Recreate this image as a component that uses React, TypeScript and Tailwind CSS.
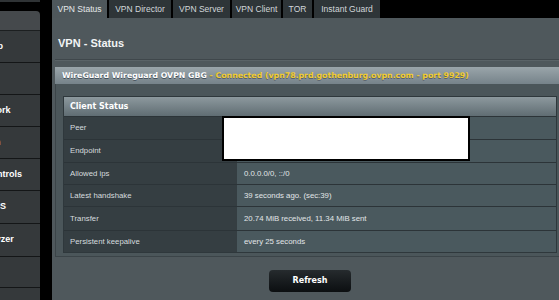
import React from "react";

const menu = [
  { label: "Network Map", h: "h-[32px]" },
  { label: "AiMesh", h: "h-[32px]" },
  { label: "Guest Network", h: "h-[32px]" },
  { label: "AiProtection", h: "h-[32px]" },
  { label: "Parental Controls", h: "h-[32px]" },
  { label: "Adaptive QoS", h: "h-[33px]" },
  { label: "Traffic Analyzer", h: "h-[33px]" },
  { label: "Game", h: "h-[31px]" },
  { label: "Open NAT", h: "h-[31px]" },
];

const tabs = [
  { label: "VPN Status", w: "w-[55px]", active: true },
  { label: "VPN Director", w: "w-[62px]" },
  { label: "VPN Server", w: "w-[57px]" },
  { label: "VPN Client", w: "w-[49px]" },
  { label: "TOR", w: "w-[29px]" },
  { label: "Instant Guard", w: "w-[66px]" },
];

const rows = [
  { label: "Peer", value: "", h: "h-[23px]" },
  { label: "Endpoint", value: "", h: "h-[23px]" },
  { label: "Allowed ips", value: "0.0.0.0/0, ::/0", h: "h-[22px]" },
  { label: "Latest handshake", value: "39 seconds ago. (sec:39)", h: "h-[22px]" },
  { label: "Transfer", value: "20.74 MiB received, 11.34 MiB sent", h: "h-[24px]" },
  { label: "Persistent keepalive", value: "every 25 seconds", h: "h-[22px]" },
];

export default function App() {
  return (
    <div className="w-[559px] h-[300px] overflow-hidden bg-black flex font-['Liberation_Sans',Arial,sans-serif]">
      {/* side menu, cut off on the left */}
      <aside className="w-[40px] shrink-0 flex flex-col overflow-hidden">
        <div className="h-[3px] bg-[#2f3335] border-b border-black shrink-0" />
        <div className="h-[8px] shrink-0" />
        <div className="h-[20px] shrink-0 bg-[#45494c] rounded-tr-[4px] border-b border-[#1c1f20]" />
        {menu.map((m) => (
          <div
            key={m.label}
            className={`${m.h} shrink-0 flex items-center bg-[#35393b] border-b border-[#141617] overflow-hidden`}
          >
            <span className="ml-[-53px] whitespace-nowrap text-[9px] font-bold text-white">{m.label}</span>
          </div>
        ))}
      </aside>

      <main className="ml-[12px] w-[515px] shrink-0 flex flex-col">
        {/* tabs */}
        <div className="h-[18px] shrink-0 flex gap-[2px] bg-black">
          {tabs.map((t) => (
            <div
              key={t.label}
              className={`${t.w} shrink-0 flex items-center justify-center text-[8.5px] whitespace-nowrap ${
                t.active ? "bg-[#4e575b] text-[#e4e8ea]" : "bg-[#2e3538] text-[#d2d7da]"
              }`}
            >
              {t.label}
            </div>
          ))}
        </div>

        <div className="flex-1 bg-[#4f585c] pl-[3px] flex flex-col">
          <h1 className="pt-[17px] pl-[3px] leading-[16px] text-[11px] font-bold text-[#f2f4f5]">VPN - Status</h1>
          <div className="mt-[8px] h-[2px] border-t border-[#3f474b] bg-[#5a6367]" />

          {/* wireguard block */}
          <div className="mt-[6px] w-[510px]">
            <div className="h-[17px] flex items-center pl-[7px] bg-gradient-to-b from-[#9aa5aa] to-[#76838a] text-[7.8px] font-bold whitespace-nowrap font-['DejaVu_Sans',Verdana,sans-serif]">
              <span className="text-white [text-shadow:0_1px_0_#44505a]">WireGuard Wireguard OVPN GBG</span>
              <span className="text-[#f2cc2e] [text-shadow:0_1px_0_#56606a]">&nbsp;- Connected (vpn78.prd.gothenburg.ovpn.com - port 9929)</span>
            </div>

            <div className="bg-[#4b565a] border-x border-b border-[#3b4448] pt-[12px] px-[7px] pb-[3px]">
              <div className="relative border border-[#2f383c]">
                <div className="h-[19px] flex items-center pl-[6px] bg-gradient-to-b from-[#8d999e] to-[#606d73] text-[8px] font-bold text-white font-['DejaVu_Sans',Verdana,sans-serif]">
                  Client Status
                </div>
                {rows.map((r) => (
                  <div key={r.label} className={`${r.h} flex border-t border-[#2c3438] text-[7.8px]`}>
                    <div className="w-[173px] shrink-0 bg-[#353e42] flex items-center pl-[6px] text-[#d6dcdf]">{r.label}</div>
                    <div className="flex-1 bg-[#4a595e] flex items-center pl-[7px] text-[#e2e6e8]">{r.value}</div>
                  </div>
                ))}
                {/* redaction box */}
                <div className="absolute left-[158px] top-[19px] w-[248px] h-[45px] bg-white border-2 border-black" />
              </div>
            </div>

            <div className="flex justify-center mt-[13px]">
              <button className="w-[82px] h-[22px] rounded-[4px] bg-gradient-to-b from-[#262b2e] to-[#0c0f11] text-white text-[8px] font-bold font-['DejaVu_Sans',Verdana,sans-serif]">
                Refresh
              </button>
            </div>
          </div>
        </div>
      </main>
    </div>
  );
}
